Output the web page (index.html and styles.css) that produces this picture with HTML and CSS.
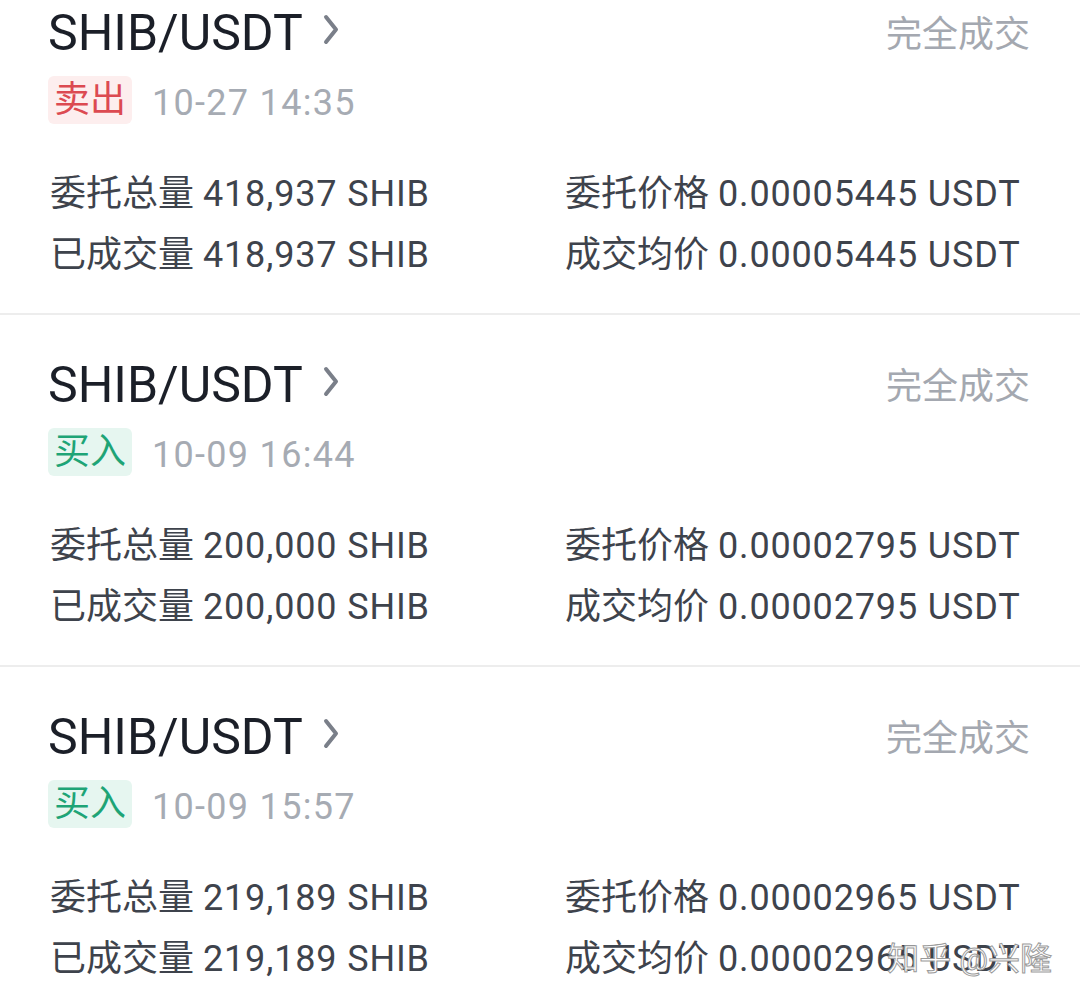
FILE: index.html
```html
<!DOCTYPE html>
<html lang="zh-CN">
<head>
  <meta charset="UTF-8">
  <meta name="viewport" content="width=device-width, initial-scale=1">
  <title>历史委托</title>
  <link rel="stylesheet" href="styles.css">
</head>
<body>

  <div class="orders">

    <div class="order">
      <div class="order-head">
        <div class="pair">SHIB/USDT
          <svg class="chevron" width="16" height="31" viewBox="0 0 16 31"><polyline points="3,3 13,15.5 3,28" /></svg>
        </div>
        <span class="status">完全成交</span>
      </div>
      <div class="order-meta">
        <span class="tag sell">卖出</span>
        <span class="time">10-27 14:35</span>
      </div>
      <div class="order-grid">
        <div class="cell"><span class="label">委托总量</span> <span class="value">418,937 SHIB</span></div>
        <div class="cell"><span class="label">委托价格</span> <span class="value">0.00005445 USDT</span></div>
        <div class="cell"><span class="label">已成交量</span> <span class="value">418,937 SHIB</span></div>
        <div class="cell"><span class="label">成交均价</span> <span class="value">0.00005445 USDT</span></div>
      </div>
    </div>

    <div class="order">
      <div class="order-head">
        <div class="pair">SHIB/USDT
          <svg class="chevron" width="16" height="31" viewBox="0 0 16 31"><polyline points="3,3 13,15.5 3,28" /></svg>
        </div>
        <span class="status">完全成交</span>
      </div>
      <div class="order-meta">
        <span class="tag buy">买入</span>
        <span class="time">10-09 16:44</span>
      </div>
      <div class="order-grid">
        <div class="cell"><span class="label">委托总量</span> <span class="value">200,000 SHIB</span></div>
        <div class="cell"><span class="label">委托价格</span> <span class="value">0.00002795 USDT</span></div>
        <div class="cell"><span class="label">已成交量</span> <span class="value">200,000 SHIB</span></div>
        <div class="cell"><span class="label">成交均价</span> <span class="value">0.00002795 USDT</span></div>
      </div>
    </div>

    <div class="order">
      <div class="order-head">
        <div class="pair">SHIB/USDT
          <svg class="chevron" width="16" height="31" viewBox="0 0 16 31"><polyline points="3,3 13,15.5 3,28" /></svg>
        </div>
        <span class="status">完全成交</span>
      </div>
      <div class="order-meta">
        <span class="tag buy">买入</span>
        <span class="time">10-09 15:57</span>
      </div>
      <div class="order-grid">
        <div class="cell"><span class="label">委托总量</span> <span class="value">219,189 SHIB</span></div>
        <div class="cell"><span class="label">委托价格</span> <span class="value">0.00002965 USDT</span></div>
        <div class="cell"><span class="label">已成交量</span> <span class="value">219,189 SHIB</span></div>
        <div class="cell"><span class="label">成交均价</span> <span class="value">0.00002965 USDT</span></div>
      </div>
    </div>

  </div>

  <div class="watermark">知乎 @兴隆</div>

</body>
</html>
```

FILE: styles.css
```css
/* Style global */
body {
  margin: 0;
  font-family: 'Roboto', 'Noto Sans CJK SC', sans-serif;
  background: #fff;
  color: #3e434c;
  overflow: hidden;
}
.orders {
  margin-top: -37px;
}
/* Carte d'ordre */
.order {
  padding: 40px 50px 27px 48px;
  border-bottom: 2px solid #ededed;
}
.order-head {
  display: flex;
  justify-content: space-between;
  align-items: flex-start;
  height: 60px;
}
.pair {
  display: flex;
  align-items: flex-start;
  gap: 20px;
  font-size: 50px;
  line-height: 60px;
  color: #1b1f28;
}
.chevron {
  margin-top: 11px;
}
.chevron polyline {
  fill: none;
  stroke: #7a7f89;
  stroke-width: 4;
  stroke-linecap: round;
  stroke-linejoin: round;
}
.status {
  font-size: 36px;
  line-height: 56px;
  margin-top: 4px;
  color: #a4a8b0;
}
.order-meta {
  display: flex;
  align-items: flex-start;
  gap: 20px;
  margin-top: 13px;
  height: 51px;
}
.tag {
  font-size: 36px;
  line-height: 48px;
  padding: 0 6px;
  border-radius: 6px;
}
.tag.sell {
  color: #dc4a51;
  background: #fdeeee;
}
.tag.buy {
  color: #1ea476;
  background: #e6f6f0;
}
.time {
  font-size: 36px;
  line-height: 48px;
  margin-top: 3px;
  letter-spacing: 1.3px;
  color: #a6abb3;
}
.order-grid {
  display: grid;
  grid-template-columns: 515px 1fr;
  margin-top: 37px;
  font-size: 36px;
  line-height: 61px;
}
.cell {
  white-space: nowrap;
  padding-left: 2px;
}
.value {
  letter-spacing: 0.85px;
}
/* Filigrane */
.watermark {
  position: absolute;
  right: 28px;
  bottom: 24px;
  font-size: 32px;
  color: #fff;
  -webkit-text-stroke: 1px #9a9a9a;
}
```
